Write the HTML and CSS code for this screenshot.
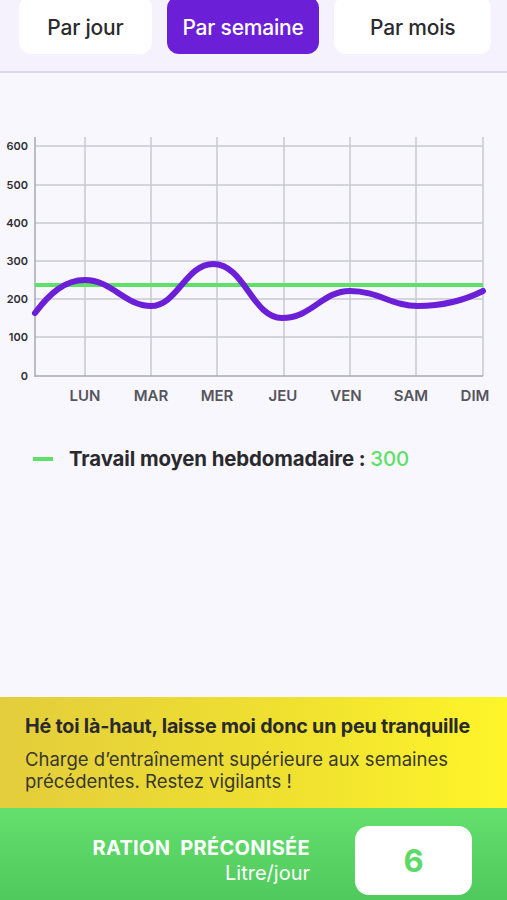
FILE: index.html
```html
<!DOCTYPE html>
<html lang="fr">
  <head>
    <meta charset="UTF-8" />
    <meta name="viewport" content="width=device-width, initial-scale=1.0" />
    <title>Charge hebdomadaire</title>
    <link rel="stylesheet" href="styles.css">
  </head>
  <body>
    <div class="tabs">
      <button class="tab">Par jour</button>
      <button class="tab active">Par semaine</button>
      <button class="tab">Par mois</button>
    </div>

    <svg class="chart" viewBox="0 74 507 340" width="507" height="340">
      <!-- grid -->
      <g class="grid">
        <line x1="35" y1="146" x2="483" y2="146" />
        <line x1="35" y1="185" x2="483" y2="185" />
        <line x1="35" y1="223" x2="483" y2="223" />
        <line x1="35" y1="261" x2="483" y2="261" />
        <line x1="35" y1="299" x2="483" y2="299" />
        <line x1="35" y1="337" x2="483" y2="337" />
        <line x1="85" y1="137" x2="85" y2="376" />
        <line x1="151" y1="137" x2="151" y2="376" />
        <line x1="217" y1="137" x2="217" y2="376" />
        <line x1="284" y1="137" x2="284" y2="376" />
        <line x1="350" y1="137" x2="350" y2="376" />
        <line x1="416" y1="137" x2="416" y2="376" />
        <line x1="483" y1="137" x2="483" y2="376" />
      </g>
      <g class="axis">
        <line x1="35" y1="137" x2="35" y2="377" />
        <line x1="35" y1="376" x2="483" y2="376" />
      </g>
      <g class="ylabels">
        <text x="28" y="150">600</text>
        <text x="28" y="189">500</text>
        <text x="28" y="227">400</text>
        <text x="28" y="265">300</text>
        <text x="28" y="303">200</text>
        <text x="28" y="341">100</text>
        <text x="28" y="380">0</text>
      </g>
      <g class="xlabels">
        <text x="85" y="401">LUN</text>
        <text x="151" y="401">MAR</text>
        <text x="217" y="401">MER</text>
        <text x="283" y="401">JEU</text>
        <text x="346" y="401">VEN</text>
        <text x="411" y="401">SAM</text>
        <text x="475" y="401">DIM</text>
      </g>
      <line class="avg" x1="35" y1="285" x2="483" y2="285" />
      <path class="curve" d="M35,313 C50,293 65,280 85,280 C112,280 125,306 151,306 C177,306 186,264 213,264 C245,264 252,318 282,318 C312,318 322,291 350,291 C378,291 392,306 418,306 C445,306 465,300 483,291" />
    </svg>

    <div class="legend">
      <span class="legend-mark"></span>
      <span class="legend-text">Travail moyen hebdomadaire : <span class="legend-value">300</span></span>
    </div>

    <div class="spacer"></div>

    <div class="alert">
      <h2>Hé toi là-haut, laisse moi donc un peu tranquille</h2>
      <p>Charge d’entraînement supérieure aux semaines précédentes. Restez vigilants !</p>
    </div>

    <div class="ration">
      <div class="ration-label">
        <span class="ration-title">RATION&nbsp; PRÉCONISÉE</span>
        <span class="ration-unit">Litre/jour</span>
      </div>
      <div class="ration-value">6</div>
    </div>
  </body>
</html>
```

FILE: styles.css
```css
body {
  margin: 0;
  height: 900px;
  display: flex;
  flex-direction: column;
  font-family: "Inter", "Liberation Sans", sans-serif;
  background-color: #f8f7fd;
  overflow: hidden;
}
.tabs {
  height: 73px;
  display: flex;
  gap: 15px;
  padding: 0 16px 0 19px;
  background-color: #f5f2fd;
  border-bottom: 2px solid #dcd8ea;
  box-sizing: border-box;
}
.tab {
  margin-top: -4px;
  height: 58px;
  width: 133px;
  border: none;
  border-radius: 12px;
  background-color: white;
  color: #2b2b2e;
  font-family: inherit;
  font-size: 21px;
  font-weight: 500;
  letter-spacing: -0.2px;
  padding: 4px 0 0;
}
.tab:nth-child(2) {
  width: 153px;
}
.tab:nth-child(3) {
  width: 157px;
}
.tab.active {
  background-color: #6b20d8;
  color: white;
}
.chart {
  display: block;
  margin-top: 1px;
}
.grid line {
  stroke: #c9c8d0;
  stroke-width: 1.5;
}
.axis line {
  stroke: #a9a8b0;
  stroke-width: 1.5;
}
.ylabels text {
  font-size: 11px;
  font-weight: 600;
  fill: #2e2e32;
  text-anchor: end;
}
.xlabels text {
  font-size: 15px;
  font-weight: 600;
  fill: #55555c;
  text-anchor: middle;
}
.avg {
  stroke: #5fe068;
  stroke-width: 4;
}
.curve {
  fill: none;
  stroke: #6b20d8;
  stroke-width: 6;
  stroke-linecap: round;
}
.legend {
  display: flex;
  align-items: center;
  gap: 16px;
  padding: 32px 0 0 33px;
}
.legend-mark {
  width: 20px;
  height: 4px;
  background-color: #5fe068;
}
.legend-text {
  font-size: 20.4px;
  font-weight: 700;
  letter-spacing: -0.1px;
  color: #2a2a2e;
}
.legend-value {
  color: #5fe068;
  font-weight: 500;
}
.spacer {
  flex: 1;
}
.alert {
  height: 111px;
  box-sizing: border-box;
  padding: 17px 16px 0 25px;
  background: linear-gradient(90deg, #e3cd3c, #f0e22f 60%, #fff52a);
  color: #2a2a2e;
}
.alert h2 {
  margin: 0;
  font-size: 19.7px;
  font-weight: 700;
  letter-spacing: -0.2px;
}
.alert p {
  margin: 10px 0 0;
  font-size: 18.5px;
  line-height: 22px;
  color: #38382f;
}
.ration {
  height: 92px;
  box-sizing: border-box;
  display: flex;
  align-items: center;
  justify-content: flex-end;
  gap: 45px;
  padding: 13px 35px 0 0;
  background: linear-gradient(180deg, #64e06f, #4fc95b);
}
.ration-label {
  display: flex;
  flex-direction: column;
  align-items: flex-end;
  color: white;
  line-height: 24px;
}
.ration-title {
  font-size: 20px;
  font-weight: 700;
  letter-spacing: 0.3px;
}
.ration-unit {
  font-size: 20px;
  margin-top: 1px;
}
.ration-value {
  width: 117px;
  height: 69px;
  border-radius: 14px;
  background-color: white;
  display: flex;
  align-items: center;
  justify-content: center;
  color: #5dd968;
  font-size: 31px;
  font-weight: 700;
}
```
